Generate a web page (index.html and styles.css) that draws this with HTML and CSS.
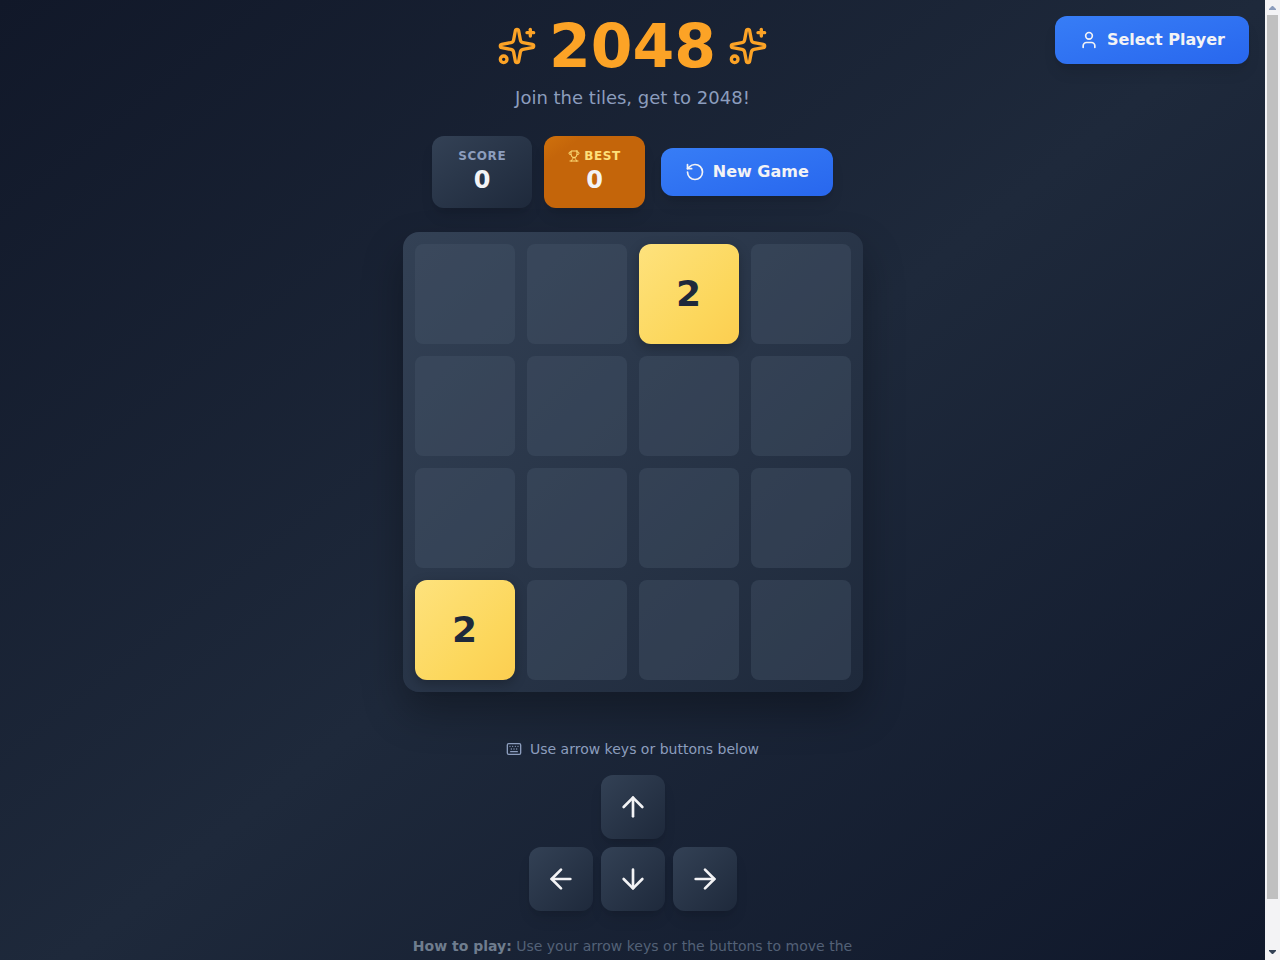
FILE: index.html
```html
<!DOCTYPE html>
<html lang="en">
<head>
<meta charset="utf-8">
<meta name="viewport" content="width=device-width, initial-scale=1">
<title>2048</title>
<link rel="stylesheet" href="styles.css">
</head>
<body>
<svg class="sprite" aria-hidden="true">
  <symbol id="sparkles" viewBox="0 0 24 24"><path d="M11.017 2.814a1 1 0 0 1 1.966 0l1.051 5.558a2 2 0 0 0 1.594 1.594l5.558 1.051a1 1 0 0 1 0 1.966l-5.558 1.051a2 2 0 0 0-1.594 1.594l-1.051 5.558a1 1 0 0 1-1.966 0l-1.051-5.558a2 2 0 0 0-1.594-1.594l-5.558-1.051a1 1 0 0 1 0-1.966l5.558-1.051a2 2 0 0 0 1.594-1.594z"/><path d="M20 2v4"/><path d="M22 4h-4"/><circle cx="4" cy="20" r="2"/></symbol>
</svg>
<div class="viewport">
  <div class="page">
    <button class="button player-button" type="button">
      <svg class="icon icon-md" viewBox="0 0 24 24" aria-hidden="true"><path d="M19 21v-2a4 4 0 0 0-4-4H9a4 4 0 0 0-4 4v2"/><circle cx="12" cy="7" r="4"/></svg>
      Select Player
    </button>
    <main class="game">
      <header class="header">
        <div class="title-row">
          <svg class="icon icon-xl" aria-hidden="true"><use href="#sparkles"/></svg>
          <h1 class="title">2048</h1>
          <svg class="icon icon-xl" aria-hidden="true"><use href="#sparkles"/></svg>
        </div>
        <p class="subtitle">Join the tiles, get to 2048!</p>
      </header>
      <section class="toolbar">
        <div class="scores">
          <div class="score">
            <div class="score-label">SCORE</div>
            <div class="score-value">0</div>
          </div>
          <div class="score score-best">
            <div class="score-label">
              <svg class="icon icon-xs" viewBox="0 0 24 24" aria-hidden="true"><path d="M6 9H4.500a2.500 2.500 0 0 1 0-5H6"/><path d="M18 9h1.500a2.500 2.500 0 0 0 0-5H18"/><path d="M4 22h16"/><path d="M10 14.660V17c0 .55-.47.98-.97 1.210C7.850 18.750 7 20.240 7 22"/><path d="M14 14.660V17c0 .55.47.98.97 1.210C16.150 18.750 17 20.240 17 22"/><path d="M18 2H6v7a6 6 0 0 0 12 0V2Z"/></svg>
              BEST
            </div>
            <div class="score-value">0</div>
          </div>
        </div>
        <button class="button" type="button">
          <svg class="icon icon-md" viewBox="0 0 24 24" aria-hidden="true"><path d="M3 12a9 9 0 1 0 9-9 9.750 9.750 0 0 0-6.740 2.740L3 8"/><path d="M3 3v5h5"/></svg>
          New Game
        </button>
      </section>
      <section class="board" aria-label="Board">
        <div class="cell"></div><div class="cell"></div><div class="cell tile">2</div><div class="cell"></div>
        <div class="cell"></div><div class="cell"></div><div class="cell"></div><div class="cell"></div>
        <div class="cell"></div><div class="cell"></div><div class="cell"></div><div class="cell"></div>
        <div class="cell tile">2</div><div class="cell"></div><div class="cell"></div><div class="cell"></div>
      </section>
      <section class="controls">
        <p class="hint">
          <svg class="icon icon-sm" viewBox="0 0 24 24" aria-hidden="true"><path d="M10 8h.01M12 12h.01M14 8h.01M16 12h.01M18 8h.01M6 8h.01M7 16h10M8 12h.01"/><rect width="20" height="16" x="2" y="4" rx="2"/></svg>
          Use arrow keys or buttons below
        </p>
        <div class="pad">
          <button class="key key-up" type="button" aria-label="Up"><svg class="icon icon-lg" viewBox="0 0 24 24"><path d="m5 12 7-7 7 7"/><path d="M12 19V5"/></svg></button>
          <button class="key key-left" type="button" aria-label="Left"><svg class="icon icon-lg" viewBox="0 0 24 24"><path d="m12 19-7-7 7-7"/><path d="M19 12H5"/></svg></button>
          <button class="key" type="button" aria-label="Down"><svg class="icon icon-lg" viewBox="0 0 24 24"><path d="M12 5v14"/><path d="m19 12-7 7-7-7"/></svg></button>
          <button class="key" type="button" aria-label="Right"><svg class="icon icon-lg" viewBox="0 0 24 24"><path d="M5 12h14"/><path d="m12 5 7 7-7 7"/></svg></button>
        </div>
      </section>
      <p class="help"><strong>How to play:</strong> Use your arrow keys or the buttons to move the</p>
    </main>
  </div>
  <div class="scrollbar" aria-hidden="true">
    <svg class="scroll-arrow" viewBox="0 0 15 15"><path fill="#8c9dbd" d="M7 6h1l3 3v1H4V9z"/></svg>
    <div class="scroll-track"><div class="scroll-thumb"></div></div>
    <svg class="scroll-arrow" viewBox="0 0 15 15"><path fill="#334155" d="M4 5h7v1L8 9H7L4 6z"/></svg>
  </div>
</div>
</body>
</html>
```
FILE: styles.css
```css
* {
  box-sizing: border-box;
}

body {
  margin: 0;
  background: #0f172a;
  color: #f8fafc;
  font-family: "DejaVu Sans", sans-serif;
  font-size: 16px;
  line-height: 24px;
}

h1,
p {
  margin: 0;
}

.sprite {
  position: absolute;
  width: 0;
  height: 0;
}

.viewport {
  display: flex;
  align-items: flex-start;
  height: 100vh;
  overflow: hidden;
}

.page {
  position: relative;
  flex: 1;
  min-width: 0;
  min-height: 100vh;
  background: linear-gradient(to bottom right, #111829, #1e293b, #0f172a);
}

.scrollbar {
  display: flex;
  flex-direction: column;
  flex: none;
  width: 15px;
  height: 100%;
  background: #f3f3f5;
}

.scroll-arrow {
  flex: none;
  width: 15px;
  height: 15px;
}

.scroll-track {
  flex: 1;
  padding: 0 2px;
}

.scroll-thumb {
  height: 95%;
  background: #c0c0c0;
}

.icon {
  flex: none;
  fill: none;
  stroke: currentColor;
  stroke-width: 2;
  stroke-linecap: round;
  stroke-linejoin: round;
}

.icon-xs { width: 12px; height: 12px; }
.icon-sm { width: 16px; height: 16px; }
.icon-md { width: 20px; height: 20px; }
.icon-lg { width: 32px; height: 32px; }
.icon-xl { width: 40px; height: 40px; }

.button {
  display: flex;
  align-items: center;
  gap: 8px;
  padding: 12px 24px;
  border: 0;
  border-radius: 12px;
  background: linear-gradient(to bottom right, #377df6, #2867ee);
  box-shadow: 0 10px 15px -3px rgba(0, 0, 0, 0.1), 0 4px 6px -4px rgba(0, 0, 0, 0.1);
  color: #f3f3f5;
  font: bold 16px/24px "DejaVu Sans", sans-serif;
  cursor: pointer;
}

.player-button {
  position: absolute;
  top: 16px;
  right: 16px;
}

.game {
  display: flex;
  flex-direction: column;
  align-items: center;
  gap: 24px;
  padding: 16px 16px 56px;
}

.header {
  display: flex;
  flex-direction: column;
  align-items: center;
  gap: 8px;
}

.title-row {
  display: flex;
  align-items: center;
  gap: 12px;
  color: #fca326;
}

.title {
  font-size: 60px;
  line-height: 60px;
}

.subtitle {
  color: #8c9dbd;
  font-size: 18px;
  line-height: 28px;
}

.toolbar {
  display: flex;
  flex-wrap: wrap;
  align-items: center;
  justify-content: center;
  gap: 16px;
}

.scores {
  display: flex;
  gap: 12px;
}

.score {
  min-width: 100px;
  padding: 12px 24px;
  border-radius: 12px;
  background: linear-gradient(to bottom right, #334155, #1e293b);
  box-shadow: 0 10px 15px -3px rgba(0, 0, 0, 0.1), 0 4px 6px -4px rgba(0, 0, 0, 0.1);
  text-align: center;
}

.score-best {
  background: linear-gradient(to bottom right, #cf710c, #c4650a 20%, #c4650a);
}

.score-label {
  display: flex;
  align-items: center;
  justify-content: center;
  gap: 4px;
  color: #8c9dbd;
  font-size: 12px;
  font-weight: bold;
  letter-spacing: 0.05em;
  line-height: 16px;
}

.score-best .score-label {
  color: #fee07a;
}

.score-value {
  color: #f3f3f5;
  font-size: 24px;
  font-weight: bold;
  line-height: 32px;
}

.board {
  display: grid;
  grid-template-columns: repeat(4, 1fr);
  gap: 12px;
  width: 100%;
  max-width: 460px;
  padding: 12px;
  border-radius: 16px;
  background: linear-gradient(to bottom right, #334155, #1e293b);
  box-shadow: 0 20px 40px rgba(0, 0, 0, 0.3);
}

.cell {
  display: flex;
  align-items: center;
  justify-content: center;
  aspect-ratio: 1;
  border-radius: 8px;
  background: rgba(71, 85, 105, 0.4);
}

.tile {
  border-radius: 12px;
  background: linear-gradient(to bottom right, #fee27d, #fcd75c 65%, #fcce50);
  box-shadow: 0 4px 12px rgba(0, 0, 0, 0.25);
  color: #1e293b;
  font-size: 36px;
  font-weight: bold;
  line-height: 40px;
}

.controls {
  display: flex;
  flex-direction: column;
  align-items: center;
  gap: 16px;
  padding-top: 23px;
}

.hint {
  display: flex;
  align-items: center;
  gap: 8px;
  color: #8c9dbd;
  font-size: 14px;
  line-height: 20px;
}

.pad {
  display: grid;
  grid-template-columns: repeat(3, 64px);
  grid-auto-rows: 64px;
  gap: 8px;
}

.key {
  display: flex;
  align-items: center;
  justify-content: center;
  padding: 0;
  border: 0;
  border-radius: 12px;
  background: linear-gradient(to bottom right, #334155, #1e293b);
  box-shadow: 0 10px 15px -3px rgba(0, 0, 0, 0.1), 0 4px 6px -4px rgba(0, 0, 0, 0.1);
  color: #f3f3f5;
  cursor: pointer;
}

.key-up {
  grid-column: 2;
}

.key-left {
  grid-column: 1;
}

.help {
  max-width: 448px;
  color: #536177;
  font-size: 14px;
  line-height: 22px;
  text-align: center;
}

.help strong {
  color: #6f7d8e;
}
```
